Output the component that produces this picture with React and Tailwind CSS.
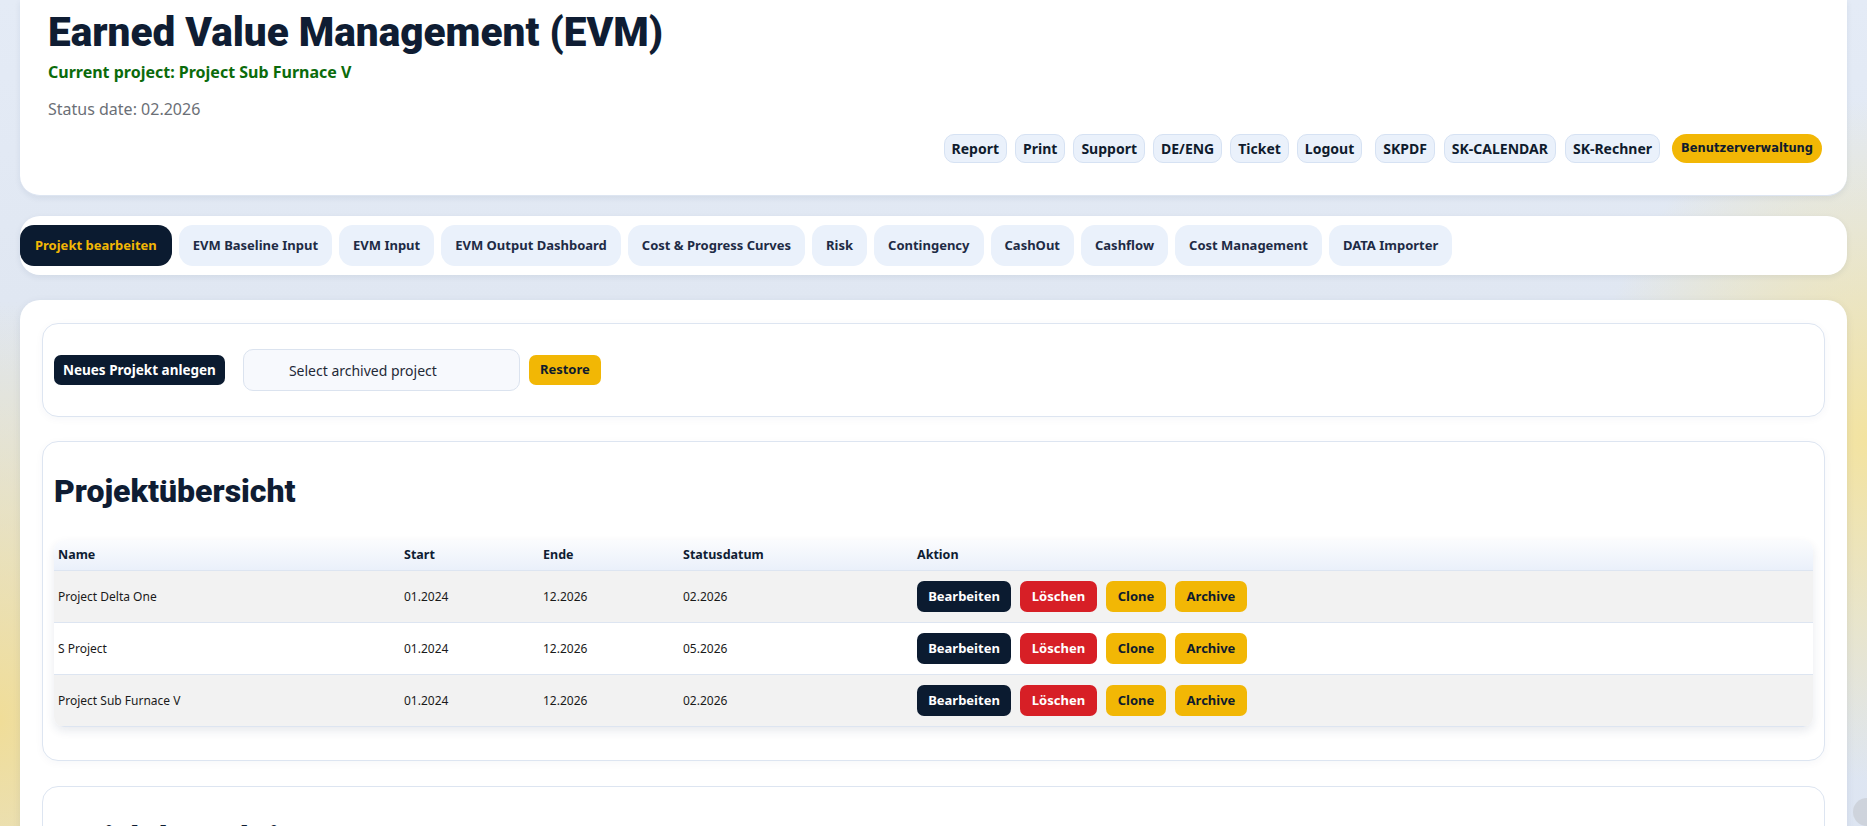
import React from "react";

const topButtons = ["Report", "Print", "Support", "DE/ENG", "Ticket", "Logout"];
const topButtons2 = ["SKPDF", "SK-CALENDAR", "SK-Rechner"];
const tabs = [
  "EVM Baseline Input",
  "EVM Input",
  "EVM Output Dashboard",
  "Cost & Progress Curves",
  "Risk",
  "Contingency",
  "CashOut",
  "Cashflow",
  "Cost Management",
  "DATA Importer",
];
const rows = [
  { name: "Project Delta One", start: "01.2024", end: "12.2026", status: "02.2026", bg: "bg-[#f2f2f2]" },
  { name: "S Project", start: "01.2024", end: "12.2026", status: "05.2026", bg: "bg-white" },
  { name: "Project Sub Furnace V", start: "01.2024", end: "12.2026", status: "02.2026", bg: "bg-[#f2f2f2]" },
];

const headingFont = { fontFamily: 'Roboto, "Noto Sans", sans-serif' };

function Pill({ children }) {
  return (
    <span className="flex h-[29px] items-center rounded-[10px] border border-[#d6e2f3] bg-[#eaf1fb] px-[7px] text-[14px] font-bold text-[#0f1b2d]">
      {children}
    </span>
  );
}

export default function App() {
  return (
    <div
      className="relative min-h-[826px] w-full overflow-hidden text-[#0f1d33] bg-[radial-gradient(ellipse_240px_420px_at_0px_720px,#f0dd98_0%,rgba(240,221,152,0)_100%),radial-gradient(ellipse_280px_340px_at_1867px_440px,#f3e3a0_0%,rgba(243,227,160,0)_100%),linear-gradient(180deg,#e4ebf6_0%,#dfe6f1_40%,#dde5f2_100%)]"
      style={{ fontFamily: '"Noto Sans", "DejaVu Sans", sans-serif' }}
    >
      <div className="mx-[20px] flex flex-col">
        {/* Header card */}
        <div className="flex flex-col rounded-b-[20px] border-b border-[#dde5f1] bg-white pl-[28px] pr-[25px] pb-[32px] shadow-[0_2px_6px_rgba(30,50,90,0.08)]">
          <h1
            className="mt-[8px] text-[40.5px] font-black leading-[48px] text-[#0f1d33]"
            style={headingFont}
          >
            Earned Value Management (EVM)
          </h1>
          <div className="mt-[6px] text-[16px] font-bold leading-[20px] text-[#0b6b0b]">
            Current project: Project Sub Furnace V
          </div>
          <div className="mt-[16px] text-[16px] leading-[22px] text-[#6b6f76]">
            Status date: 02.2026
          </div>
          <div className="mt-[14px] flex items-center justify-end">
            <div className="flex gap-[8px]">
              {topButtons.map((b) => (
                <Pill key={b}>{b}</Pill>
              ))}
            </div>
            <div className="ml-[13px] flex gap-[9px]">
              {topButtons2.map((b) => (
                <Pill key={b}>{b}</Pill>
              ))}
            </div>
            <span
              className="ml-[12px] flex h-[29px] items-center rounded-full bg-[#f2b705] px-[9px] text-[11.5px] font-bold text-[#0f1b2d]"
              style={{ fontFamily: '"DejaVu Sans", sans-serif' }}
            >
              Benutzerverwaltung
            </span>
          </div>
        </div>

        {/* Tabs card */}
        <div className="mt-[20px] flex items-center gap-[7px] rounded-[20px] bg-white py-[9px] pr-[10px] shadow-[0_2px_6px_rgba(30,50,90,0.08)]">
          <span className="flex h-[41px] items-center rounded-[14px] bg-[#0b1b30] px-[15px] text-[13px] font-bold text-[#f2b705]">
            Projekt bearbeiten
          </span>
          {tabs.map((t) => (
            <span
              key={t}
              className="flex h-[41px] items-center rounded-[14px] bg-[#eaf1fb] px-[14px] text-[13px] font-bold text-[#1e2b45]"
            >
              {t}
            </span>
          ))}
        </div>

        {/* Main card */}
        <div className="mt-[25px] flex flex-col rounded-[20px] bg-white px-[22px] pt-[23px] pb-[40px] shadow-[0_2px_8px_rgba(30,50,90,0.08)]">
          {/* actions card */}
          <div className="flex items-center rounded-[16px] border border-[#dde5f1] bg-white px-[11px] py-[25px] shadow-[0_2px_8px_rgba(30,50,90,0.04)]">
            <span className="flex h-[30px] items-center rounded-[7px] bg-[#0b1b30] px-[9px] text-[13.5px] font-bold text-white">
              Neues Projekt anlegen
            </span>
            <div className="ml-[18px] flex h-[42px] w-[277px] items-center rounded-[10px] border border-[#dbe3ef] bg-[#f7f9fd] pl-[45px] text-[14px] text-[#1f2937]">
              Select archived project
            </div>
            <span className="ml-[9px] flex h-[30px] items-center rounded-[7px] bg-[#f2b705] px-[11px] text-[13px] font-bold text-[#0f1b2d]">
              Restore
            </span>
          </div>

          {/* Overview card */}
          <div className="mt-[24px] flex flex-col rounded-[16px] border border-[#dde5f1] bg-white px-[11px] pt-[29px] pb-[33px] shadow-[0_2px_8px_rgba(30,50,90,0.04)]">
            <h2 className="text-[32px] font-black leading-[40px] text-[#0f1d33]" style={headingFont}>
              Projektübersicht
            </h2>
            <div className="mt-[29px] overflow-hidden rounded-[10px] shadow-[0_4px_10px_rgba(30,50,90,0.10)]">
              <div className="grid h-[31px] grid-cols-[350px_139px_140px_234px_1fr] items-center border-b border-[#dde5f1] bg-[linear-gradient(180deg,#fbfcfe_0%,#eaf0fa_100%)] text-[12.5px] font-bold text-[#0f1d33]">
                <span className="pl-[4px]">Name</span>
                <span>Start</span>
                <span>Ende</span>
                <span>Statusdatum</span>
                <span>Aktion</span>
              </div>
              {rows.map((r) => (
                <div
                  key={r.name}
                  className={`grid h-[52px] grid-cols-[350px_139px_140px_234px_1fr] items-center border-b border-[#dde5f1] text-[12px] text-[#1a1a1a] ${r.bg}`}
                >
                  <span className="pl-[4px]">{r.name}</span>
                  <span>{r.start}</span>
                  <span>{r.end}</span>
                  <span>{r.status}</span>
                  <div className="flex gap-[9px] text-[13px] font-bold">
                    <span className="flex h-[31px] w-[94px] items-center justify-center rounded-[7px] bg-[#0b1b30] text-white">
                      Bearbeiten
                    </span>
                    <span className="flex h-[31px] w-[77px] items-center justify-center rounded-[7px] bg-[#d71f26] text-white">
                      Löschen
                    </span>
                    <span className="flex h-[31px] w-[60px] items-center justify-center rounded-[7px] bg-[#f2b705] text-[#0f1b2d]">
                      Clone
                    </span>
                    <span className="flex h-[31px] w-[72px] items-center justify-center rounded-[7px] bg-[#f2b705] text-[#0f1b2d]">
                      Archive
                    </span>
                  </div>
                </div>
              ))}
            </div>
          </div>

          {/* Permissions card */}
          <div className="mt-[25px] flex flex-col rounded-[16px] border border-[#dde5f1] bg-white px-[11px] pt-[31px] pb-[40px]">
            <h2 className="text-[32px] font-black leading-[40px] text-[#0f1d33]" style={headingFont}>
              Projektberechtigungen &amp; Sperren
            </h2>
          </div>
        </div>
      </div>

      {/* floating button at edge */}
      <div className="absolute right-[-14px] top-[798px] h-[28px] w-[28px] rounded-full bg-[#c8ccd3] opacity-70" />
    </div>
  );
}
